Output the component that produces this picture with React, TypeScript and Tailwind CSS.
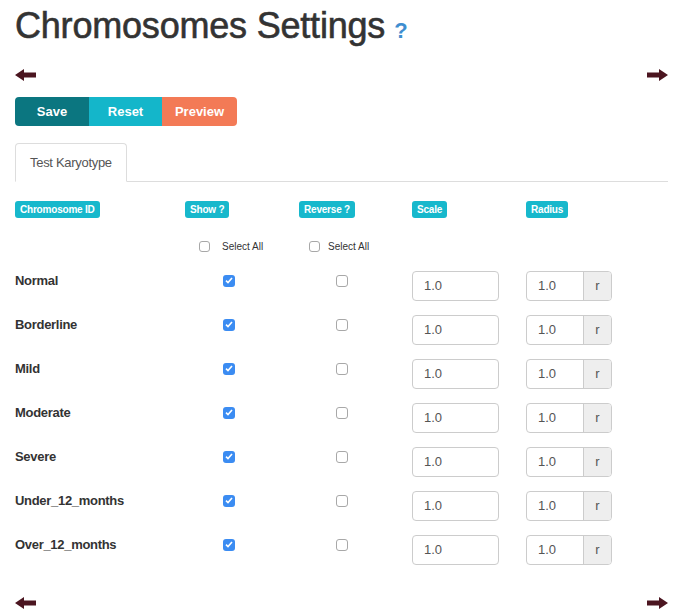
import React from "react";

const ROWS = [
  "Normal",
  "Borderline",
  "Mild",
  "Moderate",
  "Severe",
  "Under_12_months",
  "Over_12_months",
];

const COLS = "grid grid-cols-[170px_114px_113px_114px_142px]";

function Arrow({ dir }: { dir: "left" | "right" }) {
  return (
    <svg
      width="21"
      height="12"
      viewBox="0 0 21 12"
      className={dir === "right" ? "scale-x-[-1]" : ""}
    >
      <path d="M0 6 L9 0 L9 3.5 L21 3.5 L21 8.5 L9 8.5 L9 12 Z" fill="#4b1520" />
    </svg>
  );
}

function Check({ on, small }: { on?: boolean; small?: boolean }) {
  const size = small ? "h-[11px] w-[11px]" : "h-[12px] w-[12px]";
  if (on)
    return (
      <span className={`${size} flex items-center justify-center rounded-[3px] bg-[#3b8cf2]`}>
        <svg width="8" height="7" viewBox="0 0 8 7">
          <path d="M1 3.6 L3 5.6 L7 1" fill="none" stroke="#fff" strokeWidth="1.6" />
        </svg>
      </span>
    );
  return <span className={`${size} block rounded-[3px] border border-[#a8a8a8] bg-white`} />;
}

function Badge({ children }: { children: React.ReactNode }) {
  return (
    <span className="inline-flex h-[17px] items-center rounded-[3px] bg-[#17b8cc] px-[5px] text-[10px] font-bold tracking-[-0.2px] text-white">
      {children}
    </span>
  );
}

export default function App() {
  return (
    <div className="w-[683px] bg-white px-[15px] font-['Liberation_Sans',Arial,sans-serif] text-[13px] text-[#333]">
      <h1 className="flex items-baseline pt-[6px] text-[36px] font-normal leading-[40px] tracking-[-0.2px] text-[#333] [-webkit-text-stroke:0.6px_#333]">
        Chromosomes Settings
        <span className="ml-[9px] text-[22px] font-bold text-[#3e8ed0] [-webkit-text-stroke:0]">?</span>
      </h1>

      <div className="mt-[17px] flex h-[14px] items-center justify-between">
        <Arrow dir="left" />
        <Arrow dir="right" />
      </div>

      <div className="mt-[15px] flex h-[29px] text-[13px] font-bold text-white">
        <button className="w-[74px] rounded-l-[4px] bg-[#0b7680]">Save</button>
        <button className="w-[73px] bg-[#14b6ca]">Reset</button>
        <button className="w-[75px] rounded-r-[4px] bg-[#f37a56]">Preview</button>
      </div>

      <div className="mt-[17px] flex border-b border-[#ddd]">
        <div className="-mb-px w-[112px] whitespace-nowrap rounded-t-[4px] border border-[#ddd] border-b-white bg-white px-[14px] py-[9px] leading-[19px] tracking-[-0.3px] text-[#555]">
          Test Karyotype
        </div>
      </div>

      <div className={`${COLS} mt-[17px]`}>
        <div><Badge>Chromosome ID</Badge></div>
        <div><Badge>Show ?</Badge></div>
        <div><Badge>Reverse ?</Badge></div>
        <div><Badge>Scale</Badge></div>
        <div><Badge>Radius</Badge></div>
      </div>

      <div className={`${COLS} mt-[22px] h-[30px] text-[10px]`}>
        <div />
        <div className="flex items-start gap-[12px] pl-[14px]">
          <Check small />
          <span className="leading-[11px]">Select All</span>
        </div>
        <div className="flex items-start gap-[8px] pl-[10px]">
          <Check small />
          <span className="leading-[11px]">Select All</span>
        </div>
      </div>

      <div>
        {ROWS.map((name) => (
          <div key={name} className={`${COLS} h-[44px]`}>
            <div className="pt-[1px] font-bold leading-[18px] tracking-[-0.3px]">{name}</div>
            <div className="pl-[38px] pt-[4px]">
              <Check on />
            </div>
            <div className="pl-[37px] pt-[4px]">
              <Check />
            </div>
            <div>
              <div className="flex h-[30px] w-[87px] items-center rounded-[4px] border border-[#ccc] pl-[11px] text-[#555]">
                1.0
              </div>
            </div>
            <div>
              <div className="flex h-[30px] w-[86px] rounded-[4px] border border-[#ccc] text-[#555]">
                <div className="flex flex-1 items-center pl-[11px]">1.0</div>
                <div className="flex w-[28px] items-center justify-center rounded-r-[3px] border-l border-[#ccc] bg-[#eee]">
                  r
                </div>
              </div>
            </div>
          </div>
        ))}
      </div>

      <div className="mt-[17px] flex h-[14px] items-center justify-between">
        <Arrow dir="left" />
        <Arrow dir="right" />
      </div>
      <div className="h-[10px]" />
    </div>
  );
}
